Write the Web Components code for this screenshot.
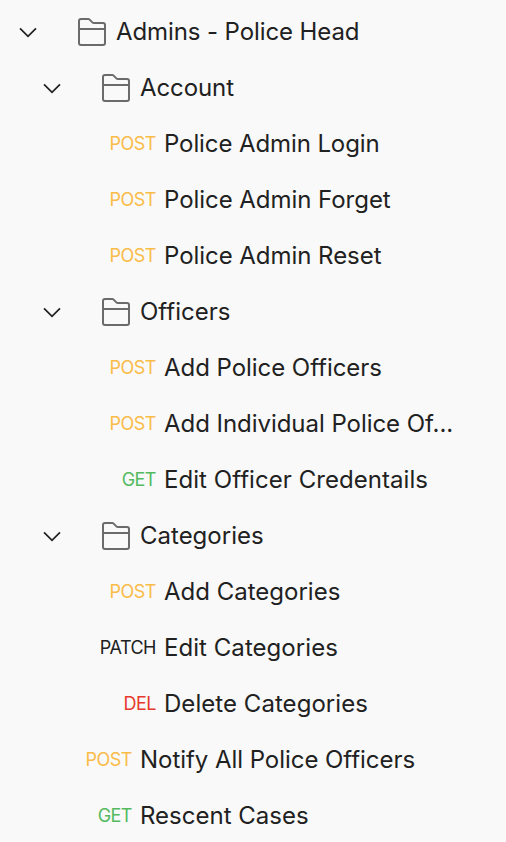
<!DOCTYPE html>
<html lang="en"><head><meta charset="utf-8"><title>Collections</title>
<style>body{margin:0;background:#f9f9f9;font-family:Inter,"Liberation Sans",sans-serif;font-weight:400;font-feature-settings:"calt" 0;color:#212121}</style></head>
<body>
<tree-list></tree-list>
<script>
class TreeFolder extends HTMLElement{
 connectedCallback(){
  this.attachShadow({mode:'open'}).innerHTML=`<style>
  :host{display:flex;align-items:center;height:56px;box-sizing:border-box;padding-left:calc(16px + var(--level)*24px);font-size:24px;white-space:nowrap}
  svg{flex:none;display:block}.chev{margin-right:36px}.folder{margin-right:8px}
  span{line-height:56px;letter-spacing:var(--track,0)}
  </style><svg class="chev" width="24" height="24" fill="none" stroke="#212121" stroke-width="1.7"><path d="M4 8.3l8 8 8-8"/></svg><svg class="folder" width="32" height="32" fill="none" stroke="#6b6b6b" stroke-width="2"><path d="M3 27V5Q3 3 5 3H12.2Q13 3 13.6 3.6L16.4 6.4Q17 7 17.8 7H27Q29 7 29 9V27Q29 29 27 29H5Q3 29 3 27M3 13H29"/></svg><span><slot></slot></span>`;
  this.style.setProperty('--level',this.getAttribute('level'));
 }}
class TreeRequest extends HTMLElement{
 connectedCallback(){
  this.attachShadow({mode:'open'}).innerHTML=`<style>
  :host{display:flex;align-items:center;height:56px;padding-left:calc(52px + var(--level)*24px);font-size:24px;white-space:nowrap}
  b{display:flex;justify-content:flex-end;font-weight:inherit;font-size:18px;letter-spacing:-.5px;line-height:56px;height:56px;width:56px;margin-right:8px;flex:none}
  .POST{color:#fabc48}.GET{color:#53ba60}.DEL{color:#e63a2c}
  span{line-height:56px;letter-spacing:var(--track,0)}</style><b class="${this.getAttribute('method')}">${this.getAttribute('method')}</b><span><slot></slot></span>`;
  this.style.setProperty('--level',this.getAttribute('level'));
 }}
class TreeList extends HTMLElement{
 connectedCallback(){
  this.attachShadow({mode:'open'}).innerHTML=`<style>:host{display:block;height:842px;overflow:hidden;padding-top:4px;box-sizing:border-box}
.tight{--track:-.1px}.snug{--track:-.045px}.wide{--track:.05px}</style>
<tree-folder class="tight" level="0">Admins - Police Head</tree-folder>
<tree-folder class="tight" level="1">Account</tree-folder>
<tree-request class="tight" level="2" method="POST">Police Admin Login</tree-request>
<tree-request class="snug" level="2" method="POST">Police Admin Forget</tree-request>
<tree-request class="snug" level="2" method="POST">Police Admin Reset</tree-request>
<tree-folder level="1">Officers</tree-folder>
<tree-request class="snug" level="2" method="POST">Add Police Officers</tree-request>
<tree-request class="snug" level="2" method="POST">Add Individual Police Of...</tree-request>
<tree-request class="wide" level="2" method="GET">Edit Officer Credentails</tree-request>
<tree-folder level="1">Categories</tree-folder>
<tree-request level="2" method="POST">Add Categories</tree-request>
<tree-request class="wide" level="2" method="PATCH">Edit Categories</tree-request>
<tree-request class="wide" level="2" method="DEL">Delete Categories</tree-request>
<tree-request class="snug" level="1" method="POST">Notify All Police Officers</tree-request>
<tree-request level="1" method="GET">Rescent Cases</tree-request>`;
 }}
customElements.define('tree-folder',TreeFolder);
customElements.define('tree-request',TreeRequest);
customElements.define('tree-list',TreeList);
</script></body></html>
